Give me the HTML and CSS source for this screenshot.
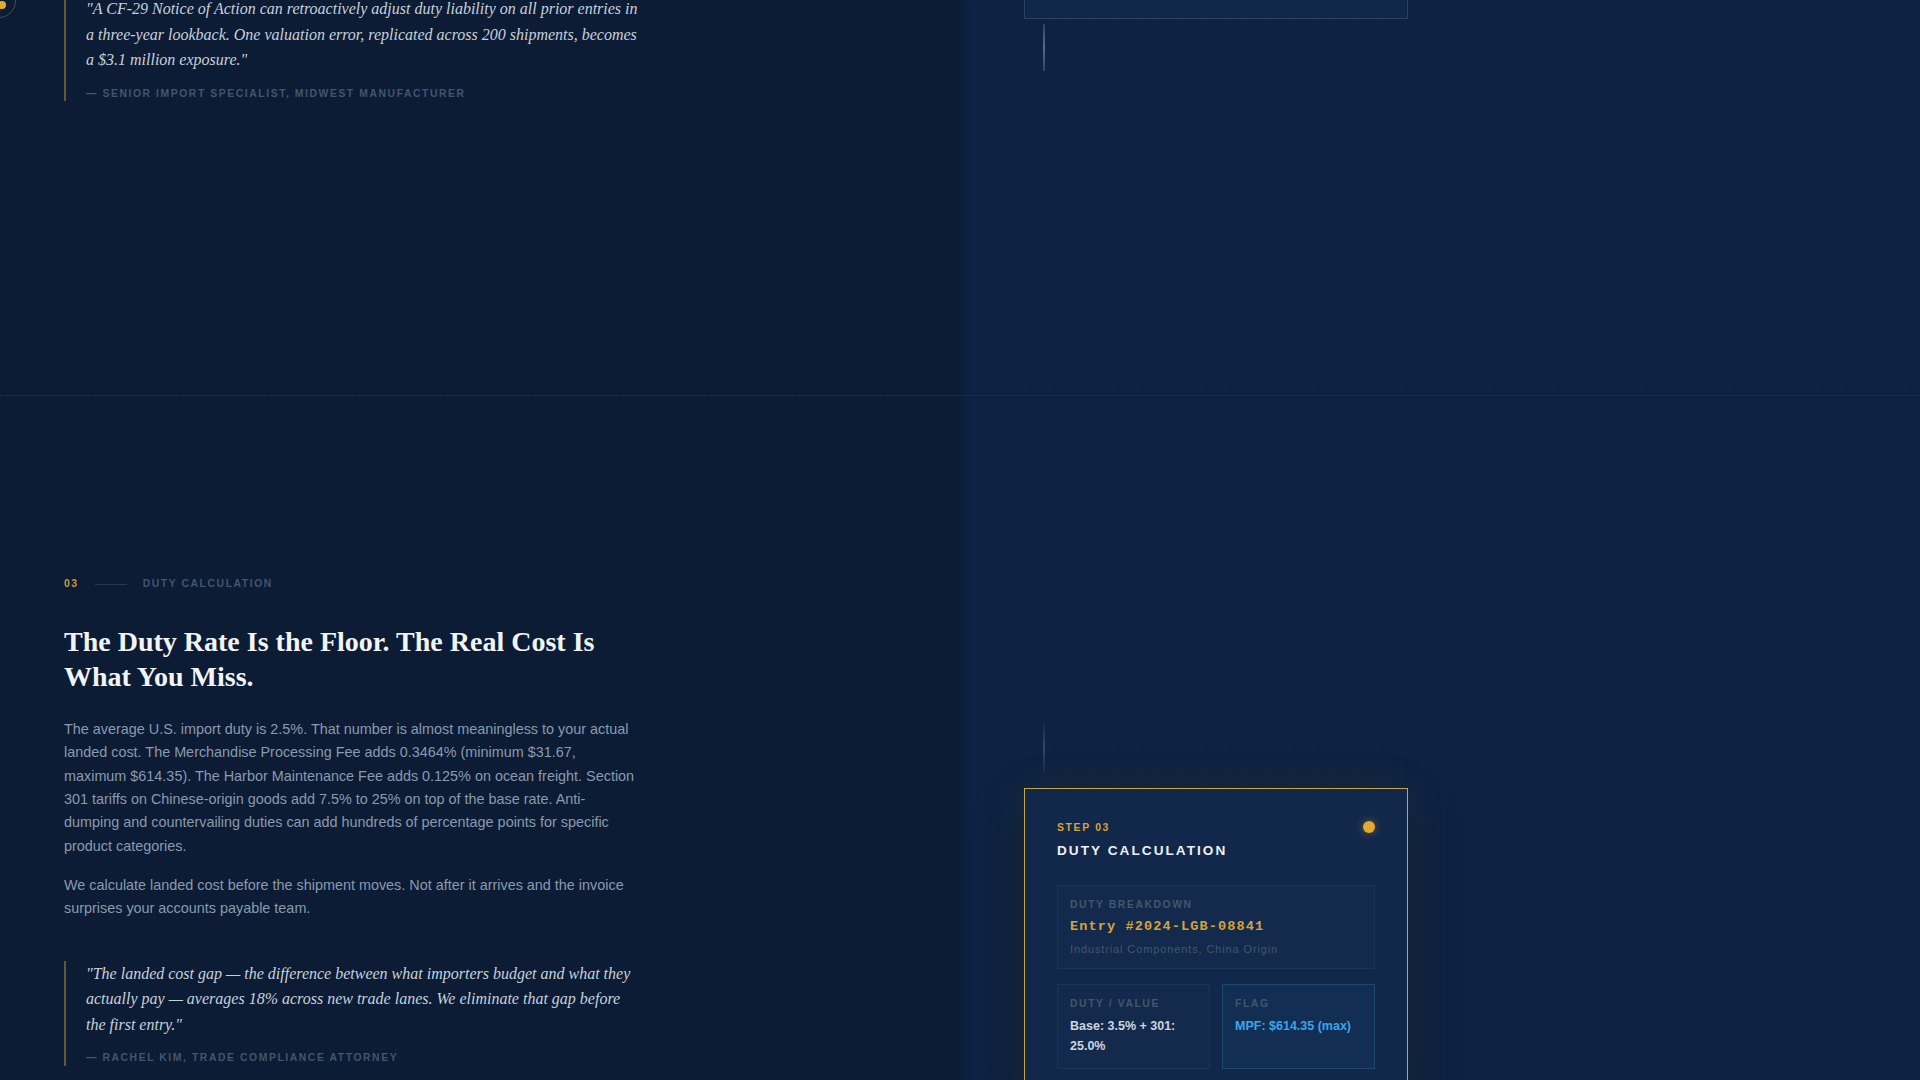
FILE: index.html
```html
<!DOCTYPE html>
<html lang="en">
<head>
    <meta charset="UTF-8">
    <meta name="viewport" content="width=device-width, initial-scale=1.0">
    <title>Landed Cost Process</title>
    <link rel="stylesheet" href="styles.css">
</head>
<body>
    <main class="process">
        <span class="progress-ring"></span>
        <span class="progress-dot"></span>

        <!-- step 02, tail end -->
        <section class="step step--prev">
            <div class="step-copy">
                <blockquote class="pull-quote pull-quote--lead">
                    <p>"A CF-29 Notice of Action can retroactively adjust duty liability on all prior entries in a three-year lookback. One valuation error, replicated across 200 shipments, becomes a $3.1 million exposure."</p>
                    <cite>— Senior Import Specialist, Midwest Manufacturer</cite>
                </blockquote>
            </div>
            <div class="step-visual">
                <div class="step-card step-card--done"></div>
                <span class="connector"></span>
            </div>
        </section>

        <!-- step 03 -->
        <section class="step">
            <div class="step-copy step-copy--open">
                <div class="eyebrow">
                    <span class="eyebrow-num">03</span>
                    <span class="eyebrow-line"></span>
                    <span class="eyebrow-text">Duty Calculation</span>
                </div>
                <h2>The Duty Rate Is the Floor. The Real Cost Is What You Miss.</h2>
                <p>The average U.S. import duty is 2.5%. That number is almost meaningless to your actual landed cost. The Merchandise Processing Fee adds 0.3464% (minimum $31.67, maximum $614.35). The Harbor Maintenance Fee adds 0.125% on ocean freight. Section 301 tariffs on Chinese-origin goods add 7.5% to 25% on top of the base rate. Anti-dumping and countervailing duties can add hundreds of percentage points for specific product categories.</p>
                <p>We calculate landed cost before the shipment moves. Not after it arrives and the invoice surprises your accounts payable team.</p>
                <blockquote class="pull-quote">
                    <p>"The landed cost gap — the difference between what importers budget and what they actually pay — averages 18% across new trade lanes. We eliminate that gap before the first entry."</p>
                    <cite>— Rachel Kim, Trade Compliance Attorney</cite>
                </blockquote>
            </div>
            <div class="step-visual step-visual--open">
                <span class="connector connector--fade"></span>
                <div class="step-card step-card--active">
                    <div class="card-head">
                        <div>
                            <div class="card-step">Step 03</div>
                            <div class="card-title">Duty Calculation</div>
                        </div>
                        <span class="card-dot"></span>
                    </div>
                    <div class="card-grid">
                        <div class="data-box data-box--wide">
                            <div class="data-label">Duty Breakdown</div>
                            <div class="data-entry">Entry #2024-LGB-08841</div>
                            <div class="data-sub">Industrial Components, China Origin</div>
                        </div>
                        <div class="data-box">
                            <div class="data-label">Duty / Value</div>
                            <div class="data-value">Base: 3.5% + 301: 25.0%</div>
                        </div>
                        <div class="data-box data-box--flag">
                            <div class="data-label">Flag</div>
                            <div class="data-value">MPF: $614.35 (max)</div>
                        </div>
                    </div>
                </div>
            </div>
        </section>
    </main>
</body>
</html>
```

FILE: styles.css
```css
* {
    padding: 0;
    margin: 0;
    box-sizing: border-box;
}

:root {
    --navy-deep: #0b1c34;
    --navy: #0e2343;
    --card-bg: #12284a;
    --gold: #d6a435;
    --gold-muted: rgba(201, 160, 64, 0.45);
    --text-light: #c9d1dc;
    --text-body: #8a9ab0;
    --text-dim: #42566f;
    --sans: 'Liberation Sans', Arial, sans-serif;
    --serif: 'Liberation Serif', 'Times New Roman', serif;
    --mono: 'Liberation Mono', 'Courier New', monospace;
}

body {
    font-family: var(--sans);
    background-color: var(--navy-deep);
    color: var(--text-body);
    overflow: hidden;
}

.process {
    position: relative;
    width: 1920px;
}

/* scroll progress marker peeking in at the top-left */
.progress-ring {
    position: absolute;
    left: -18px;
    top: -16px;
    width: 34px;
    height: 34px;
    border: 1px solid rgba(201, 164, 69, 0.35);
    border-radius: 50%;
}

.progress-dot {
    position: absolute;
    left: -2px;
    top: 1px;
    width: 8px;
    height: 8px;
    border-radius: 50%;
    background-color: #e2ab33;
}

.step {
    display: grid;
    grid-template-columns: 960px 960px;
    border-top: 1px solid rgba(120, 150, 190, 0.13);
}

.step--prev {
    border-top: none;
}

.step-copy {
    padding: 0 64px 294px;
    background-image: repeating-linear-gradient(90deg, rgba(255, 255, 255, 0.012) 0 1px, transparent 1px 22px);
}

.step-copy > * {
    width: 576px;
}

.step-copy--open {
    padding-top: 181px;
    padding-bottom: 120px;
}

.step-visual {
    display: flex;
    flex-direction: column;
    background-color: var(--navy);
    background-image: repeating-linear-gradient(90deg, rgba(255, 255, 255, 0.012) 0 1px, transparent 1px 22px);
    box-shadow: inset 6px 0 10px -6px rgba(0, 0, 0, 0.35);
}

.step-visual--open {
    padding-top: 324px;
}

/* section label */
.eyebrow {
    display: flex;
    align-items: center;
    gap: 16px;
    margin-bottom: 32px;
    font-size: 10.4px;
    line-height: 1.4;
    font-weight: bold;
    letter-spacing: 0.15em;
    text-transform: uppercase;
}

.eyebrow-num {
    color: #c49a3c;
}

.eyebrow-line {
    width: 32px;
    height: 1px;
    background-color: #26384f;
}

.eyebrow-text {
    color: var(--text-dim);
}

h2 {
    font-family: var(--serif);
    font-size: 28px;
    line-height: 1.27;
    font-weight: bold;
    color: #f2f4f7;
    margin-bottom: 23px;
}

.step-copy > p {
    font-size: 14.4px;
    line-height: 1.62;
    color: var(--text-body);
    margin-bottom: 16px;
}

/* quotes */
.pull-quote {
    border-left: 2px solid var(--gold-muted);
    padding-left: 20px;
    margin-top: 40px;
}

.pull-quote--lead {
    margin-top: -4px;
}

.pull-quote p {
    font-family: var(--serif);
    font-style: italic;
    font-size: 16px;
    line-height: 1.6;
    color: var(--text-light);
}

.pull-quote cite {
    display: block;
    margin-top: 14px;
    font-style: normal;
    font-size: 10.4px;
    line-height: 1.4;
    font-weight: bold;
    letter-spacing: 0.15em;
    text-transform: uppercase;
    color: #43556f;
}

/* right-hand step cards */
.step-card {
    width: 384px;
    margin-left: 64px;
    background-color: var(--card-bg);
    border: 1px solid #294363;
}

.step-card--done {
    height: 200px;
    margin-top: -181px;
}

.step-card--active {
    border-color: #c9a445;
    padding: 32px 32px 32px;
    box-shadow: 0 0 40px rgba(214, 164, 53, 0.08), 0 20px 50px rgba(0, 0, 0, 0.3);
}

.connector {
    display: block;
    width: 2px;
    height: 47px;
    margin: 5px 0 0 83px;
    background: linear-gradient(to bottom, rgba(110, 140, 180, 0.3), rgba(130, 160, 200, 0.6), rgba(110, 140, 180, 0.3));
}

.connector--fade {
    height: 52px;
    margin: 0 0 16px 83px;
    background: linear-gradient(to bottom, rgba(110, 140, 180, 0), rgba(110, 140, 180, 0.35), rgba(110, 140, 180, 0.1));
}

.card-head {
    display: flex;
    justify-content: space-between;
    align-items: flex-start;
    margin-bottom: 25px;
}

.card-step {
    font-size: 10.4px;
    line-height: 1.4;
    font-weight: bold;
    letter-spacing: 0.16em;
    text-transform: uppercase;
    color: var(--gold);
}

.card-title {
    margin-top: 6px;
    font-size: 13.6px;
    line-height: 1.3;
    font-weight: bold;
    letter-spacing: 0.15em;
    text-transform: uppercase;
    color: #eef1f5;
}

.card-dot {
    width: 12px;
    height: 12px;
    border-radius: 50%;
    background-color: #e4aa30;
    box-shadow: 0 0 8px rgba(228, 170, 48, 0.45);
}

.card-grid {
    display: grid;
    grid-template-columns: 1fr 1fr;
    gap: 15px 12px;
}

.data-box {
    padding: 12px;
    border: 1px solid rgba(255, 255, 255, 0.05);
    background-color: rgba(255, 255, 255, 0.012);
}

.data-box--wide {
    grid-column: 1 / -1;
}

.data-box--flag {
    border-color: #1c4870;
    background-color: rgba(40, 130, 210, 0.07);
}

.data-label {
    font-size: 10.4px;
    line-height: 1.4;
    font-weight: bold;
    letter-spacing: 0.15em;
    text-transform: uppercase;
    color: var(--text-dim);
    margin-bottom: 6px;
}

.data-entry {
    font-family: var(--mono);
    font-size: 13.6px;
    line-height: 1.3;
    font-weight: bold;
    letter-spacing: 0.08em;
    color: #d4a43a;
    margin-bottom: 6px;
}

.data-sub {
    font-size: 11px;
    line-height: 1.3;
    letter-spacing: 0.08em;
    color: var(--text-dim);
}

.data-value {
    margin-top: -2px;
    font-size: 12.5px;
    line-height: 1.6;
    font-weight: bold;
    color: #cdd5e0;
}

.data-box--flag .data-value {
    color: #38a6ec;
}
```
